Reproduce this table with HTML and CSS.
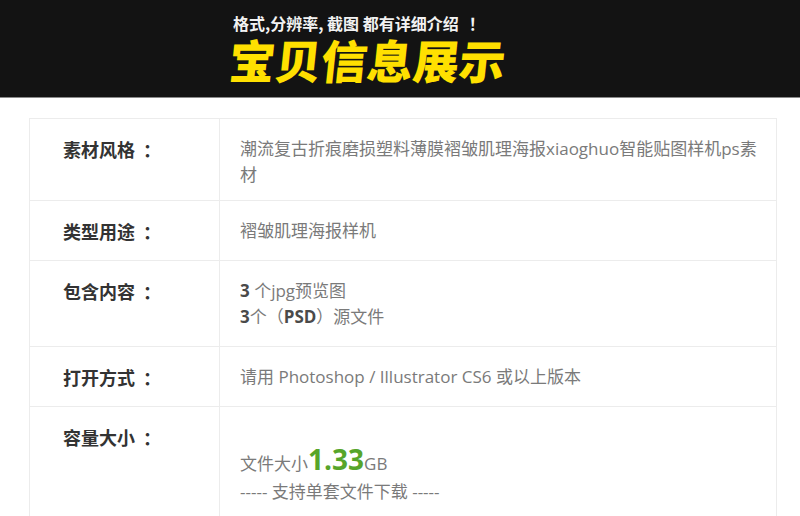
FILE: index.html
```html
<!DOCTYPE html>
<html lang="zh-CN">
<head>
<meta charset="utf-8">
<title>宝贝信息展示</title>
<link rel="stylesheet" href="styles.css">
</head>
<body>
<header class="banner">
  <div class="banner-inner">
    <p class="banner-sub">格式,分辨率, 截图 都有详细介绍<span class="excl">！</span></p>
    <h1 class="banner-title">宝贝信息展示</h1>
  </div>
</header>
<table class="info">
  <tr class="row-first">
    <th>素材风格<span class="colon">：</span></th>
    <td>潮流复古折痕磨损塑料薄膜褶皱肌理海报xiaoghuo智能贴图样机ps素材</td>
  </tr>
  <tr>
    <th>类型用途<span class="colon">：</span></th>
    <td>褶皱肌理海报样机</td>
  </tr>
  <tr>
    <th>包含内容<span class="colon">：</span></th>
    <td><b>3</b> 个jpg预览图<br><b>3</b>个（<b>PSD</b>）源文件</td>
  </tr>
  <tr>
    <th>打开方式<span class="colon">：</span></th>
    <td>请用 Photoshop / Illustrator CS6 或以上版本</td>
  </tr>
  <tr>
    <th>容量大小<span class="colon">：</span></th>
    <td>
      <div class="blank"></div>
      <div class="size-line">文件大小<span class="size">1.33</span>GB</div>
      <div>----- 支持单套文件下载 -----</div>
    </td>
  </tr>
</table>
</body>
</html>
```
FILE: styles.css
```css
html, body {
  margin: 0;
  padding: 0;
  background: #fff;
}
body {
  font-family: "Open Sans", "Noto Sans CJK SC", sans-serif;
}
.banner {
  height: 97px;
  background: #131313;
  border-bottom: 1px solid #8a8a8a;
}
.banner-inner {
  padding-left: 227px;
  padding-top: 12px;
}
.banner-sub {
  margin: 0 0 0 6px;
  font-family: "Noto Sans CJK SC", sans-serif;
  font-size: 16px;
  font-weight: 700;
  line-height: 22px;
  color: #f2f2f2;
}
.excl {
  font-family: "Noto Sans CJK TC", sans-serif;
  margin-left: 10px;
}
.colon {
  font-family: "Noto Sans CJK TC", sans-serif;
  margin-left: 8px;
}
.banner-title {
  margin: 0;
  font-family: "Noto Sans CJK SC", sans-serif;
  font-size: 46px;
  font-weight: 900;
  line-height: 50px;
  color: #ffe000;
  transform: skewX(-6deg);
  transform-origin: left bottom;
}
.info {
  margin: 20px 0 0 29px;
  width: 748px;
  border-collapse: collapse;
}
.info th, .info td {
  border: 1px solid #ececec;
  vertical-align: top;
  padding-top: 17px;
  padding-bottom: 16px;
  line-height: 26px;
}
.info th {
  width: 155px;
  padding-left: 33px;
  text-align: left;
  font-family: "Noto Sans CJK SC", sans-serif;
  font-size: 18px;
  font-weight: 700;
  color: #333;
}
.info td {
  padding-left: 20px;
  padding-right: 16px;
  font-size: 17px;
  color: #7a7a7a;
}
.info td b {
  color: #4a4a4a;
  font-weight: 700;
}
.row-first th, .row-first td {
  padding-bottom: 12px;
}
.blank {
  height: 26px;
}
.size-line {
  margin-top: -4px;
  height: 33px;
  line-height: 26px;
}
.size {
  font-size: 28px;
  font-weight: 700;
  color: #57a52a;
  line-height: 26px;
}
```
